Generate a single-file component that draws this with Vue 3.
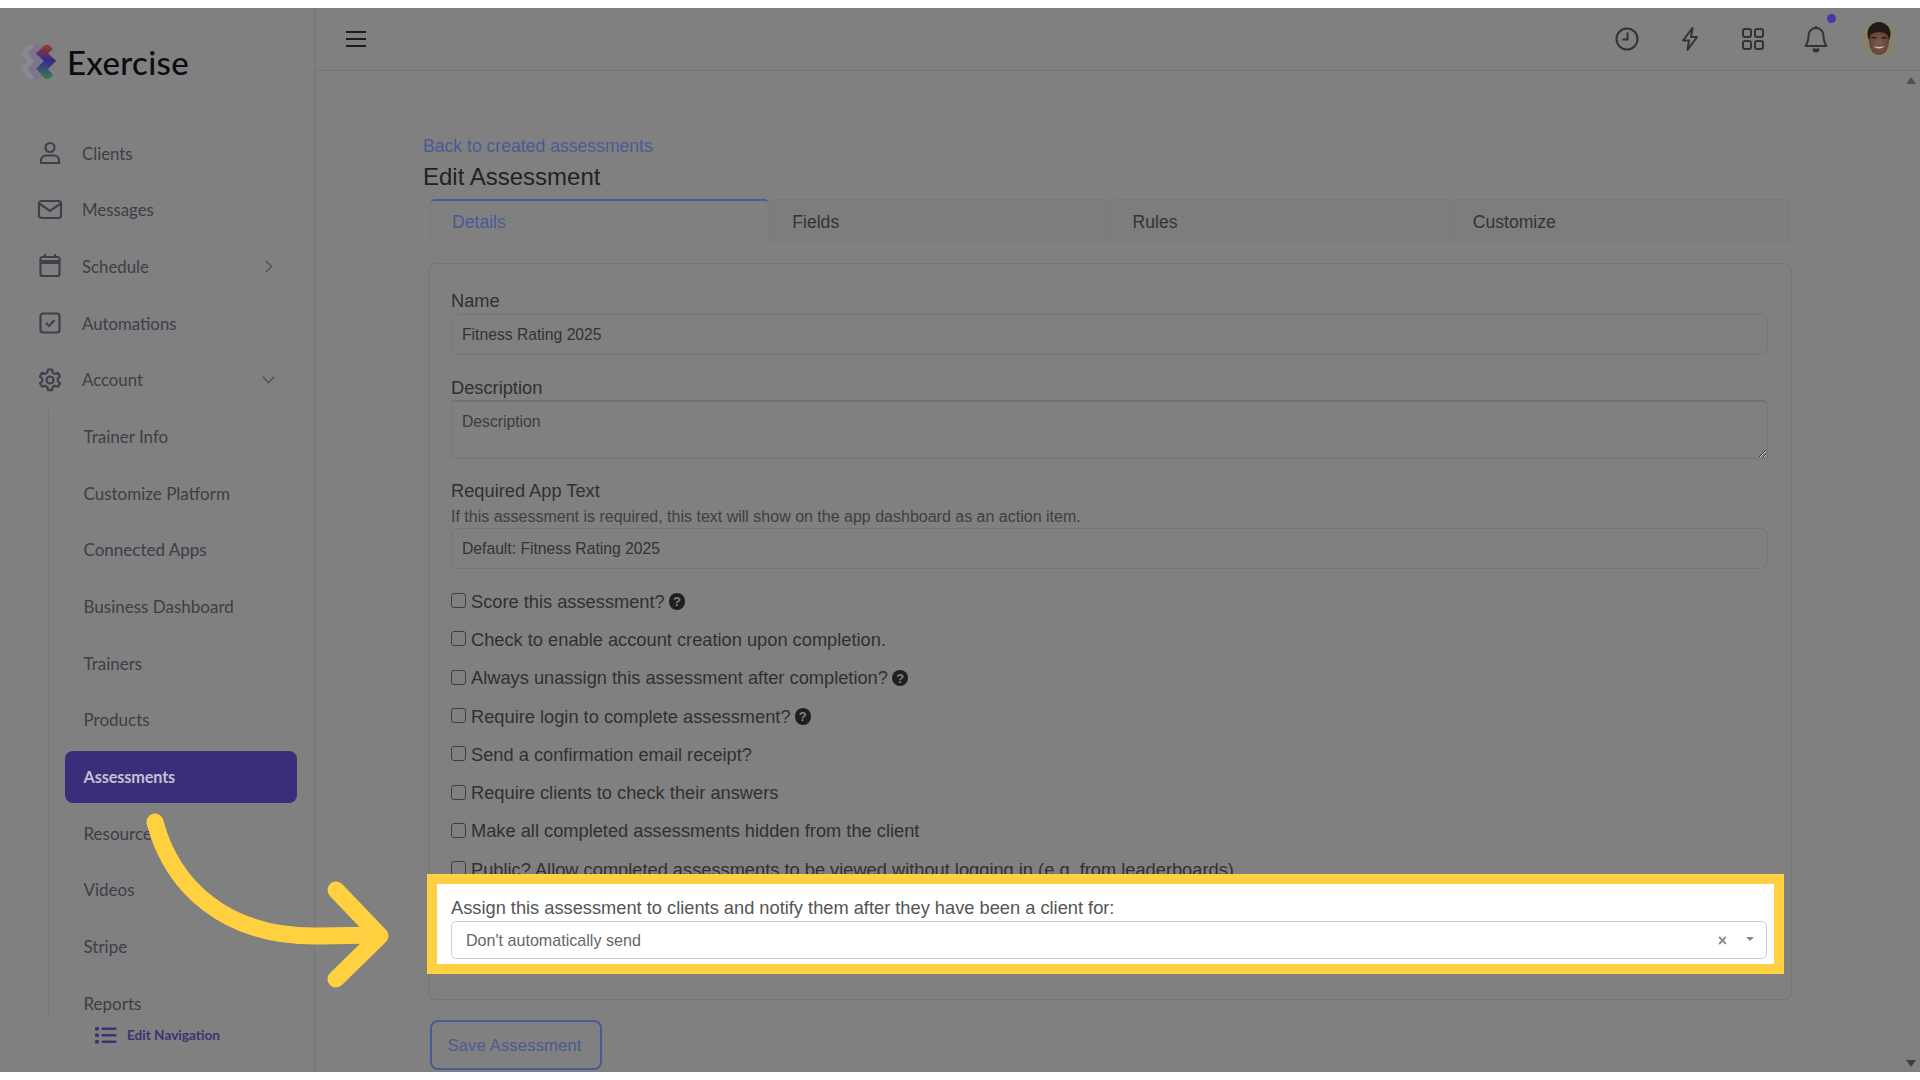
<script setup>
const subNav = ['Trainer Info', 'Customize Platform', 'Connected Apps', 'Business Dashboard', 'Trainers', 'Products', 'Assessments', 'Resources', 'Videos', 'Stripe', 'Reports']
const tabs = ['Details', 'Fields', 'Rules', 'Customize']
const checks = [
    { label: 'Score this assessment?', help: true },
    { label: 'Check to enable account creation upon completion.' },
    { label: 'Always unassign this assessment after completion?', help: true },
    { label: 'Require login to complete assessment?', help: true },
    { label: 'Send a confirmation email receipt?' },
    { label: 'Require clients to check their answers' },
    { label: 'Make all completed assessments hidden from the client' },
    { label: 'Public? Allow completed assessments to be viewed without logging in (e.g. from leaderboards)' }
]
</script>

<template>
<div class='Page'>
    <div class='Frame'>
        <aside class='Sidebar'>
            <div class='Brand'>
                <svg class='Logo' width='34' height='34' viewBox='0 0 34 34' fill='none' stroke-width='8.5' stroke-linejoin='miter'>
                    <defs>
                        <linearGradient id='logoMain' x1='0' y1='0' x2='0' y2='1'>
                            <stop offset='0' stop-color='#a02a20' />
                            <stop offset='.45' stop-color='#2a1a90' />
                            <stop offset='1' stop-color='#2a7a4a' />
                        </linearGradient>
                    </defs>
                    <path d='M11 1 L4 8.500 L11 16 L4 24 L11 33' stroke='#8f8f92' opacity='.8' />
                    <path d='M18 1 L11 8.500 L18 16 L11 24 L18 33' stroke='#7d7492' />
                    <path d='M28 1 L20 8.500 L28 16 L20 24 L28 33' stroke='url(#logoMain)' />
                </svg>
                <span class='BrandName'>Exercise</span>
            </div>

            <nav class='Nav'>
                <div class='NavItem'>
                    <svg class='NavIcon' viewBox='0 0 26 26' fill='none'>
                        <circle cx='13' cy='7.500' r='4.500' />
                        <path d='M4 23 v-2.500 a5 5 0 0 1 5 -5 h8 a5 5 0 0 1 5 5 v2.500 z' />
                    </svg>
                    <span>Clients</span>
                </div>
                <div class='NavItem'>
                    <svg class='NavIcon' viewBox='0 0 26 26' fill='none'>
                        <rect x='2' y='4' width='22' height='17' rx='2.500' />
                        <path d='M3 7 L13 14 L23 7' />
                    </svg>
                    <span>Messages</span>
                </div>
                <div class='NavItem'>
                    <svg class='NavIcon' viewBox='0 0 26 26' fill='none'>
                        <rect x='3.500' y='4' width='19' height='19' rx='2' />
                        <path d='M3.500 9 H22.500' stroke-width='4' />
                        <path d='M8 1 V5 M18 1 V5' />
                    </svg>
                    <span>Schedule</span>
                    <svg class='Chevron' viewBox='0 0 14 14' fill='none'><path d='M4 1 L10.500 7 L4 13' /></svg>
                </div>
                <div class='NavItem'>
                    <svg class='NavIcon' viewBox='0 0 26 26' fill='none'>
                        <rect x='3.500' y='3.500' width='19' height='19' rx='2.500' />
                        <path d='M9 13 L12 16 L17.500 10' />
                    </svg>
                    <span>Automations</span>
                </div>
                <div class='NavItem'>
                    <svg class='NavIcon' viewBox='0 0 26 26' fill='none'>
                        <circle cx='13' cy='13' r='3.500' />
                        <path d='M11 2.500 h4 l.7 3.100 l2.300 1.300 l3 -1 l2 3.500 l-2.300 2.100 v2.600 l2.300 2.100 l-2 3.500 l-3 -1 l-2.300 1.300 l-.7 3.100 h-4 l-.7 -3.100 l-2.300 -1.300 l-3 1 l-2 -3.500 l2.300 -2.100 v-2.600 l-2.300 -2.100 l2 -3.500 l3 1 l2.300 -1.300 z' stroke-linejoin='round' />
                    </svg>
                    <span>Account</span>
                    <svg class='Chevron' viewBox='0 0 14 14' fill='none'><path d='M1 4 L7 10.500 L13 4' /></svg>
                </div>
                <div class='SubNav'>
                    <div v-for='item in subNav' :key='item' class='SubItem' :class='{ Active: item === "Assessments" }'>{{ item }}</div>
                </div>
            </nav>

            <div class='EditNav'>
                <svg width='22' height='18' viewBox='0 0 22 18' fill='#3a3470'>
                    <rect x='0' y='1' width='4' height='3.500' rx='1' />
                    <rect x='0' y='7.500' width='4' height='3.500' rx='1' />
                    <rect x='0' y='14' width='4' height='3.500' rx='1' />
                    <rect x='6.500' y='1.500' width='15' height='2.500' rx='1' />
                    <rect x='6.500' y='8' width='15' height='2.500' rx='1' />
                    <rect x='6.500' y='14.500' width='15' height='2.500' rx='1' />
                </svg>
                <span>Edit Navigation</span>
            </div>
        </aside>

        <main class='Main'>
            <header class='Topbar'>
                <svg class='Burger' width='20' height='16' viewBox='0 0 20 16' fill='none'>
                    <path d='M0 1 H20 M0 8 H20 M0 15 H20' />
                </svg>
                <div class='TopIcons'>
                    <div class='TopIcon'>
                        <svg width='26' height='26' viewBox='0 0 26 26' fill='none'>
                            <circle cx='13' cy='13' r='10.500' />
                            <path d='M13.500 6.500 V13.500 H8.500' />
                        </svg>
                    </div>
                    <div class='TopIcon'>
                        <svg width='26' height='26' viewBox='0 0 26 26' fill='none'>
                            <path d='M15.500 2 L6 14.500 H12 L10.500 24 L20 11 H14 z' stroke-linejoin='round' />
                        </svg>
                    </div>
                    <div class='TopIcon'>
                        <svg width='24' height='24' viewBox='0 0 24 24' fill='none'>
                            <rect x='2' y='2' width='8' height='8' rx='2' />
                            <rect x='14' y='2' width='8' height='8' rx='2' />
                            <rect x='2' y='14' width='8' height='8' rx='2' />
                            <rect x='14' y='14' width='8' height='8' rx='2' />
                        </svg>
                    </div>
                    <div class='TopIcon Bell'>
                        <svg width='26' height='28' viewBox='0 0 26 28' fill='none'>
                            <path d='M13 3 a7.500 7.500 0 0 1 7.500 7.500 c0 6 1.500 8.500 3 10.500 H2.500 c1.500 -2 3 -4.500 3 -10.500 A7.500 7.500 0 0 1 13 3 z' stroke-linejoin='round' />
                            <path d='M13 1 V3' />
                            <path d='M10.500 24.500 h5 a2.500 2 0 0 1 -5 0 z' fill='#333' />
                        </svg>
                        <span class='BellDot'></span>
                    </div>
                    <div class='TopIcon'>
                        <svg class='Avatar' width='36' height='36' viewBox='0 0 36 36'>
                            <defs>
                                <clipPath id='avatarClip'><circle cx='18' cy='18' r='18' /></clipPath>
                                <radialGradient id='avatarFace' cx='.5' cy='.55' r='.6'>
                                    <stop offset='0' stop-color='#7d5a4a' />
                                    <stop offset='1' stop-color='#5c3f34' />
                                </radialGradient>
                            </defs>
                            <g clip-path='url(#avatarClip)'>
                                <rect width='36' height='36' fill='#85816a' />
                                <ellipse cx='18' cy='13' rx='11.500' ry='12' fill='#1f1a18' />
                                <ellipse cx='18' cy='21' rx='10' ry='13' fill='url(#avatarFace)' />
                                <path d='M8 14 Q18 8 28 14 L28 8 Q18 0 8 8 z' fill='#1f1a18' />
                                <rect x='10.500' y='16' width='5' height='1.500' fill='#2a1f1c' />
                                <rect x='20.500' y='16' width='5' height='1.500' fill='#2a1f1c' />
                                <path d='M12 25 Q18 30 24 25 Q18 27 12 25 z' fill='#cfc4b8' />
                            </g>
                        </svg>
                    </div>
                </div>
            </header>

            <section class='Content'>
                <a class='BackLink'>Back to created assessments</a>
                <h1 class='Title'>Edit Assessment</h1>

                <div class='Tabs'>
                    <div v-for='(tab, i) in tabs' :key='tab' class='Tab' :class='{ Active: i === 0 }'>{{ tab }}</div>
                </div>

                <div class='Card'>
                    <label class='Label'>Name</label>
                    <input class='Input' value='Fitness Rating 2025' readonly>

                    <label class='Label DescLabel'>Description</label>
                    <textarea class='Input Area' placeholder='Description' readonly></textarea>

                    <label class='Label ReqLabel'>Required App Text</label>
                    <div class='Help'>If this assessment is required, this text will show on the app dashboard as an action item.</div>
                    <input class='Input ReqInput' value='Default: Fitness Rating 2025' readonly>

                    <div class='Checks'>
                        <div v-for='check in checks' :key='check.label' class='Check'>
                            <span class='Box'></span>
                            <span>{{ check.label }}</span>
                            <span v-if='check.help' class='HelpIcon'>?</span>
                        </div>
                    </div>

                    <div class='Assign'>
                        <div class='AssignLabel'>Assign this assessment to clients and notify them after they have been a client for:</div>
                        <div class='Select'>
                            <span class='SelectValue'>Don't automatically send</span>
                            <span class='Clear'>×</span>
                            <span class='Caret'></span>
                        </div>
                    </div>
                </div>

                <button class='Save'>Save Assessment</button>
            </section>

            <span class='ScrollUp'></span>
            <span class='ScrollDown'></span>
        </main>
    </div>

    <svg class='Arrow' width='260' height='200' viewBox='0 0 260 200' fill='none'>
        <path d='M15 22 C32 86 85 138 180 136 L238 135' />
        <path d='M196 90 L240 136 L196 179' />
    </svg>
</div>
</template>

<style>
body {
    background: #fff;
}
</style>

<style scoped>
.Page {
    position: relative;
    height: 1080px;
    padding-top: 8px;
    box-sizing: border-box;
    overflow: hidden;
    background: #fff;
    font-family: 'Liberation Sans', Arial, sans-serif;
    color: #333;
}

.Frame {
    display: flex;
    height: 1064px;
    background: #808080;
}

.Sidebar {
    width: 314px;
    flex-shrink: 0;
    border-right: 1px solid #767676;
    font-family: Lato, sans-serif;
}

.Brand {
    display: flex;
    align-items: center;
    height: 34px;
    margin-top: 37px;
    padding-left: 22px;
}

.Logo {
    margin-right: 11px;
    opacity: .85;
}

.BrandName {
    font-family: Lato, sans-serif;
    font-size: 33px;
    font-weight: 500;
    color: #0c0c10;
    letter-spacing: .3px;
}

.Nav {
    margin-top: 48px;
}

.NavItem {
    display: flex;
    align-items: center;
    height: 52px;
    margin-bottom: 4.7px;
    padding-left: 37px;
    font-size: 16.8px;
    color: #3c3e48;
}

.NavIcon {
    width: 26px;
    height: 26px;
    margin-right: 19px;
    stroke: #3e404c;
    stroke-width: 2.2;
}

.Chevron {
    width: 13px;
    height: 13px;
    margin-left: auto;
    margin-right: 39px;
    stroke: #4c4e58;
    stroke-width: 1.4;
}

.SubNav {
    height: 607px;
    margin-left: 48px;
    padding-left: 16px;
    border-left: 1px solid #767676;
    overflow: hidden;
}

.SubItem {
    display: flex;
    align-items: center;
    width: 232px;
    height: 52px;
    margin-bottom: 4.7px;
    padding-left: 18.5px;
    box-sizing: border-box;
    font-size: 17px;
    color: #3c3e48;
}

.SubItem.Active {
    background: #3a2e7a;
    border-radius: 8px;
    color: #c4c0d2;
    font-weight: 700;
    font-size: 16.2px;
    letter-spacing: -.1px;
}

.EditNav {
    display: flex;
    align-items: center;
    gap: 10px;
    margin-top: 9px;
    padding-left: 95px;
    font-size: 13.6px;
    color: #3a3470;
    font-weight: 700;
}

.Main {
    position: relative;
    flex: 1;
    min-width: 0;
}

.Topbar {
    display: flex;
    align-items: center;
    justify-content: space-between;
    height: 63px;
    padding-left: 31px;
    padding-right: 9.5px;
    border-bottom: 1px solid #767676;
    box-sizing: border-box;
}

.Burger {
    stroke: #1c1c1c;
    stroke-width: 2;
}

.TopIcons {
    display: flex;
    align-items: center;
}

.TopIcon {
    position: relative;
    display: flex;
    justify-content: center;
    width: 63px;
}

.TopIcon svg {
    stroke: #333;
    stroke-width: 2;
}

.TopIcon .Avatar {
    stroke: none;
}

.BellDot {
    position: absolute;
    top: -11px;
    left: 42px;
    width: 9px;
    height: 9px;
    border-radius: 50%;
    background: #4a35a5;
}

.Content {
    padding: 65px 0 0 108px;
}

.BackLink {
    display: block;
    font-size: 17.6px;
    line-height: 20px;
    color: #4b5a96;
}

.Title {
    margin: 6px 0 0;
    font-size: 24px;
    font-weight: 400;
    line-height: 30px;
    color: #222;
}

.Tabs {
    display: flex;
    gap: 1px;
    width: 1360px;
    margin: 7px 0 0 7px;
}

.Tab {
    flex: 1;
    height: 43px;
    padding-left: 21px;
    box-sizing: border-box;
    line-height: 44px;
    font-size: 17.6px;
    color: #333;
    background: #7d7d7d;
    border: 1px solid #797979;
    border-bottom: 0;
    border-radius: 5px 5px 0 0;
}

.Tab.Active {
    background: #808080;
    color: #4b5a96;
    border-top: 2px solid #4b5a96;
    line-height: 42px;
}

.Card {
    width: 1364px;
    height: 737px;
    margin: 21px 0 0 5px;
    padding: 27px 22px 0;
    box-sizing: border-box;
    border: 1px solid #757575;
    border-radius: 8px;
}

.Label {
    display: block;
    height: 20px;
    font-size: 18.25px;
    line-height: 20px;
    color: #303030;
}

.DescLabel {
    margin-top: 23px;
}

.ReqLabel {
    margin-top: 22px;
}

.Input {
    display: block;
    width: 1317px;
    height: 41px;
    margin-top: 3px;
    padding: 0 10px;
    box-sizing: border-box;
    background: transparent;
    border: 1px solid #767676;
    border-radius: 7px;
    outline: none;
    font-family: 'Liberation Sans', Arial, sans-serif;
    font-size: 15.7px;
    color: #333;
}

.Area {
    height: 59px;
    margin-top: 2px;
    padding: 11px 10px;
    border-top: 2px solid #707070;
    border-radius: 4px;
    resize: vertical;
}

.Area::placeholder {
    color: #3c3c3c;
}

.Help {
    margin-top: 6px;
    font-size: 16px;
    line-height: 20px;
    color: #3f3f3f;
}

.ReqInput {
    margin-top: 1px;
}

.Checks {
    margin-top: 13.5px;
}

.Check {
    display: flex;
    align-items: center;
    height: 38.3px;
    font-size: 18.25px;
    color: #303030;
}

.Box {
    width: 15px;
    height: 15px;
    margin-right: 5px;
    box-sizing: border-box;
    border: 1px solid #3f3f3f;
    border-radius: 3px;
    margin-top: -2px;
}

.HelpIcon {
    display: inline-flex;
    align-items: center;
    justify-content: center;
    width: 16.5px;
    height: 16.5px;
    margin-left: 4px;
    border-radius: 50%;
    background: #1f1f1f;
    color: #808080;
    font-size: 13px;
    font-weight: 700;
}

.Assign {
    position: relative;
    width: 1357px;
    height: 100px;
    margin: -15px 0 0 -24px;
    padding: 14px 14px 5px 14px;
    box-sizing: border-box;
    border: 10px solid #ffd040;
    background: #fff;
}

.AssignLabel {
    height: 20px;
    font-size: 18.25px;
    line-height: 20px;
    color: #555;
}

.Select {
    display: flex;
    align-items: center;
    height: 38px;
    width: 1316px;
    margin-top: 3px;
    padding-left: 14px;
    box-sizing: border-box;
    border: 1px solid #ccc;
    border-radius: 5px;
    font-size: 16.1px;
    color: #666;
}

.SelectValue {
    flex: 1;
    margin-top: 1px;
}

.Clear {
    margin-right: 19px;
    margin-top: 2px;
    font-size: 16px;
    font-weight: 700;
    color: #888;
}

.Caret {
    width: 0;
    height: 0;
    margin-right: 12px;
    margin-top: -1px;
    border-left: 4.500px solid transparent;
    border-right: 4.500px solid transparent;
    border-top: 4.500px solid #888;
}

.Save {
    display: block;
    width: 172px;
    height: 50px;
    margin: 20px 0 0 7px;
    padding: 0 3px 0 0;
    background: transparent;
    border: 2.500px solid #4b5a96;
    border-radius: 8px;
    font-family: 'Liberation Sans', Arial, sans-serif;
    font-size: 16.5px;
    letter-spacing: .2px;
    color: #4b5a96;
}

.ScrollUp,
.ScrollDown {
    position: absolute;
    right: 4px;
    width: 0;
    height: 0;
    border-left: 5.500px solid transparent;
    border-right: 5.500px solid transparent;
}

.ScrollUp {
    top: 69px;
    border-bottom: 7px solid #505050;
}

.ScrollDown {
    bottom: 5px;
    border-top: 7px solid #404040;
}

.Arrow {
    position: absolute;
    left: 140px;
    top: 800px;
    stroke: #ffd040;
    stroke-width: 17;
    stroke-linecap: round;
    stroke-linejoin: round;
}
</style>
